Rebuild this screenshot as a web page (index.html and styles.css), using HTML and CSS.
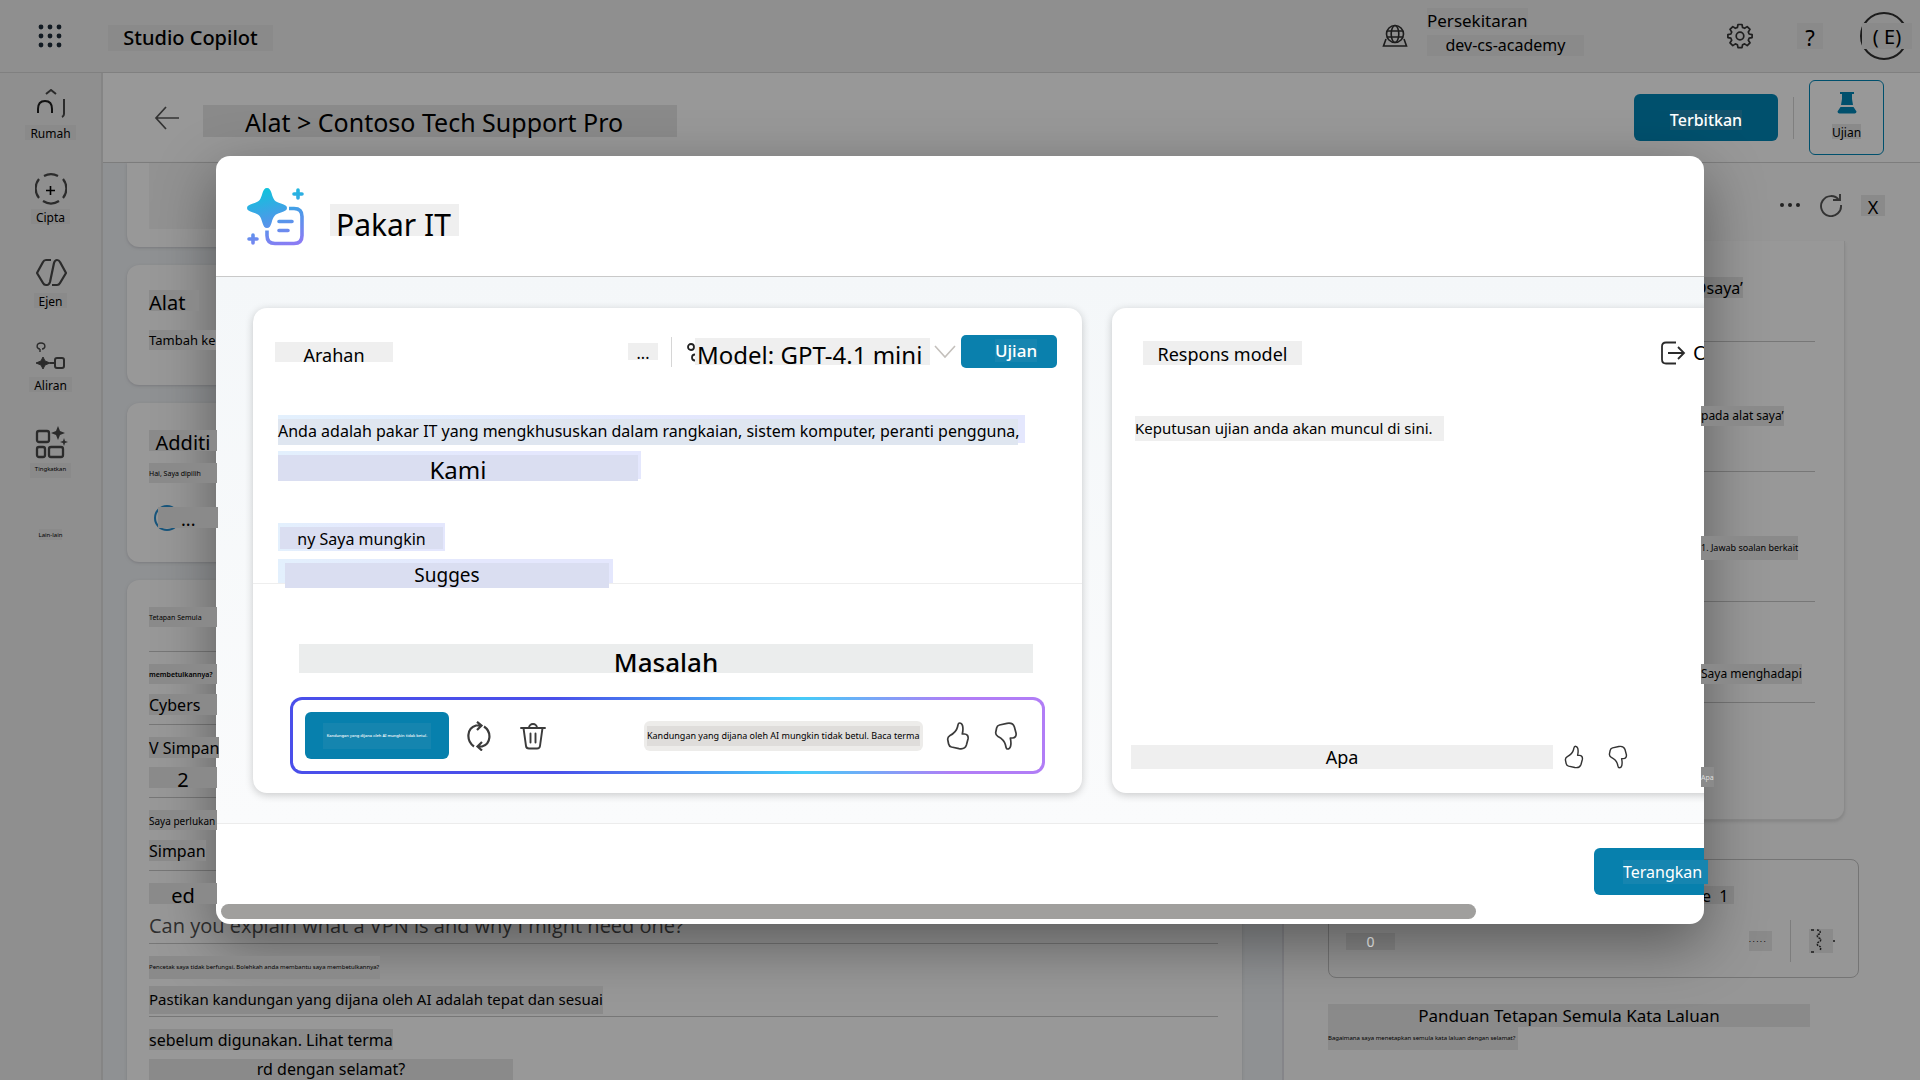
FILE: index.html
```html
<!DOCTYPE html>
<html lang="ms">
<head>
<meta charset="utf-8">
<title>Studio Copilot</title>
<link rel="stylesheet" href="styles.css">
</head>
<body>
<svg class="defs" aria-hidden="true">
  <defs>
    <linearGradient id="brand" gradientUnits="userSpaceOnUse" x1="20" y1="0" x2="36" y2="58">
      <stop offset="0" stop-color="#0fc3dc"/><stop offset="0.5" stop-color="#4a9be8"/><stop offset="1" stop-color="#8a7cf4"/>
    </linearGradient>
    <symbol id="thumb" viewBox="0 0 24 28">
      <path d="M13.5 1C12 1 12 3 11.5 5C10.500 9 8 11.500 4 13.500C2 14.700 1.400 16 1.800 18L2.600 22C3 23.800 4 24.600 5.500 25L13 26.600C16.500 27.200 19.500 25.800 20.400 23L22 17C22.600 14 21 12 18.500 12L16.300 12C17 9 17.200 6 16.500 3.500C16 1.800 15 1 13.500 1Z" fill="none" stroke="currentColor" stroke-width="1.700" stroke-linejoin="round"/>
    </symbol>
  </defs>
</svg>
<div class="app">
  <header class="topbar">
    <button class="icon-btn waffle" aria-label="Pelancar apl">
      <svg width="24" height="24" viewBox="0 0 24 24" fill="#111a22"><circle cx="3" cy="3" r="2.400"/><circle cx="12" cy="3" r="2.400"/><circle cx="21" cy="3" r="2.400"/><circle cx="3" cy="12" r="2.400"/><circle cx="12" cy="12" r="2.400"/><circle cx="21" cy="12" r="2.400"/><circle cx="3" cy="21" r="2.400"/><circle cx="12" cy="21" r="2.400"/><circle cx="21" cy="21" r="2.400"/></svg>
    </button>
    <span class="tag product">Studio Copilot</span>
    <svg class="globe" width="26" height="24" viewBox="0 0 26 24" fill="none" stroke="#1c1c1c" stroke-width="1.600"><circle cx="13" cy="10" r="8.500"/><ellipse cx="13" cy="10" rx="3.800" ry="8.500"/><path d="M5 7h16M5 13h16M4 15l-2.500 7h23L22 15"/></svg>
    <div class="env">
      <span class="tag env-label">Persekitaran</span>
      <span class="tag env-name">dev-cs-academy</span>
    </div>
    <button class="icon-btn gear" aria-label="Tetapan">
      <svg width="26" height="26" viewBox="0 0 26 26" fill="none" stroke="#1f1f1f" stroke-width="1.700" stroke-linejoin="round"><path d="M11 1.500h4l.6 3 2 .8 2.600-1.700 2.800 2.800-1.700 2.600.8 2 3 .6v3l-3 .6-.8 2 1.700 2.600-2.800 2.800-2.600-1.700-2 .8-.6 3h-4l-.6-3-2-.8-2.600 1.700L3 19.800l1.700-2.600-.8-2-3-.6v-3l3-.6.8-2L3 6.400l2.800-2.800 2.600 1.700 2-.8z"/><circle cx="13" cy="13" r="3.800"/></svg>
    </button>
    <button class="tag help" aria-label="Bantuan">?</button>
    <button class="avatar"><span class="tag">( E)</span></button>
  </header>

  <div class="shell">
    <nav class="rail">
      <a href="#" class="rail-item">
        <svg width="32" height="32" viewBox="0 0 32 32" fill="none" stroke="#2b2b2b" stroke-width="2"><path d="M11 5l5-4 5 4"/><path d="M3 24v-4q0-8 7-8t7 8v4" stroke="#111"/><path d="M29 10v15q0 2-2 3"/></svg>
        <span class="tag">Rumah</span>
      </a>
      <a href="#" class="rail-item">
        <svg width="32" height="32" viewBox="0 0 32 32" fill="none" stroke="#2b2b2b" stroke-width="2.200"><path d="M9 3a15 15 0 0 1 14 0M8 28a15 15 0 0 0 16 0M4 6a15 15 0 0 0 0 19M28 6a15 15 0 0 1 0 19"/><path d="M11 17.500h9M15.500 13v9" stroke="#000" stroke-width="1.600"/></svg>
        <span class="tag">Cipta</span>
      </a>
      <a href="#" class="rail-item">
        <svg width="32" height="32" viewBox="0 0 32 32" fill="none" stroke="#2b2b2b" stroke-width="2.200" stroke-linejoin="round"><path d="M16 3h-5Q9 3 8 5L2 16l6 10q1 2 3 2h1q2 0 3-3L19 6q1-3 3-3 2 0 3 2l6 11-6 10q-1 2-3 2h-5"/></svg>
        <span class="tag">Ejen</span>
      </a>
      <a href="#" class="rail-item">
        <svg width="32" height="32" viewBox="0 0 32 32" fill="none" stroke="#2b2b2b" stroke-width="2"><path d="M5 8C1 8 1 2 6 2s5 6 1 6M5 8v3" stroke-width="1.400"/><path d="M15 22h5"/><rect x="20" y="17" width="9" height="10" rx="2"/><path d="M8 16l2 4 5 2-5 2-2 4-2-4-5-2 5-2z" fill="#2b2b2b" stroke-width="1"/></svg>
        <span class="tag">Aliran</span>
      </a>
      <a href="#" class="rail-item">
        <svg width="34" height="34" viewBox="0 0 34 34" fill="none" stroke="#2b2b2b" stroke-width="2.300"><rect x="3" y="6" width="12" height="11" rx="2"/><rect x="3" y="22" width="8" height="10" rx="2"/><rect x="15" y="22" width="14" height="10" rx="2"/><path d="M24 1l2 5 5 2-5 2-2 5-2-5-5-2 5-2zM30 13l1 3 3 1-3 1-1 3-1-3-3-1 3-1z" fill="#2b2b2b" stroke="none"/></svg>
        <span class="tag micro">Tingkatkan</span>
      </a>
      <a href="#" class="rail-item more"><span class="tag micro">Lain-lain</span></a>
    </nav>

    <div class="content">
      <div class="titlebar">
        <button class="icon-btn back" aria-label="Kembali">
          <svg width="26" height="24" viewBox="0 0 26 24" fill="none" stroke="#333" stroke-width="1.700"><path d="M25 12H2M12 1L2 12l10 11"/></svg>
        </button>
        <h1 class="tag crumb">Alat &gt; Contoso Tech Support Pro</h1>
        <button class="publish"><span>Terbitkan</span></button>
        <span class="bar-divider"></span>
        <button class="test-toggle">
          <svg width="20" height="22" viewBox="0 0 20 22" fill="#00506d"><path d="M3 0h14v2h-2v5l1 6H4l1-6V2H3zM3.500 15h13l3 4.500q0 2-2 2h-15q-2 0-2-2z"/></svg>
          <span class="tag">Ujian</span>
        </button>
      </div>

      <div class="columns">
        <main class="cards">
          <section class="card card-top"><div class="tag filler"></div></section>
          <section class="card card-tools">
            <h2 class="tag t-head">Alat</h2>
            <p class="tag t-small">Tambah ke</p>
          </section>
          <section class="card card-extra">
            <h2 class="tag t-head wide">Additi</h2>
            <p class="tag micro wide">Hai, Saya dipilih</p>
            <div class="busy"><svg width="26" height="26" viewBox="0 0 26 26" fill="none" stroke="#17557c" stroke-width="2"><circle cx="13" cy="13" r="12"/></svg><span class="tag dots">...</span></div>
          </section>
          <section class="card card-list">
            <div class="list-head"><span class="tag micro wide">Tetapan Semula</span></div>
            <div class="row"><span class="tag micro strong wide">membetulkannya?</span><span class="tag t-mid wide">Cybers</span></div>
            <div class="row"><span class="tag t-mid">V Simpan</span><span class="tag t-head wide center">2</span></div>
            <div class="row"><span class="tag t-tiny wide">Saya perlukan</span><span class="tag t-mid">Simpan</span></div>
            <div class="row"><span class="tag t-head wide center">ed</span><span class="question">Can you explain what a VPN is and why I might need one?</span></div>
            <div class="row"><span class="tag micro printer">Pencetak saya tidak berfungsi. Bolehkah anda membantu saya membetulkannya?</span><span class="tag notice">Pastikan kandungan yang dijana oleh AI adalah tepat dan sesuai</span></div>
            <div class="row"><span class="tag t-mid">sebelum digunakan. Lihat terma</span><span class="tag t-mid secure">rd dengan selamat?</span></div>
          </section>
        </main>

        <aside class="panel">
          <div class="panel-tools">
            <button class="icon-btn" aria-label="Lagi"><svg width="22" height="22" viewBox="0 0 22 22" fill="#222"><circle cx="3" cy="11" r="2"/><circle cx="11" cy="11" r="2"/><circle cx="19" cy="11" r="2"/></svg></button>
            <button class="icon-btn" aria-label="Muat semula"><svg width="24" height="24" viewBox="0 0 24 24" fill="none" stroke="#333" stroke-width="1.900"><path d="M20 7A10 10 0 1 0 22 12M21 1v6h-7"/></svg></button>
            <button class="tag close">X</button>
          </div>
          <div class="chat-card">
            <div class="chat-row"><span class="tag t-mid">Osaya’</span></div>
            <div class="chat-row"><span class="tag t-fine">pada alat saya’</span></div>
            <div class="chat-row"><span class="tag t-mini">1. Jawab soalan berkait</span></div>
            <div class="chat-row short"><span class="tag t-fine">Saya menghadapi</span></div>
            <div class="chat-row last"><span class="tag micro light">Apa</span></div>
          </div>
          <div class="composer">
            <div class="composer-text"><span class="tag t-mid">e&nbsp; 1</span></div>
            <div class="composer-tools">
              <span class="tag count">0</span>
              <span class="tag micro mic">· · · · ·</span>
              <span class="composer-divider"></span>
              <button class="tag send" aria-label="Hantar"><svg width="26" height="24" viewBox="0 0 26 24" fill="none" stroke="#1c1c1c" stroke-width="1.500"><path d="M2 1h3M2 23h3M24 12h2"/><path d="M8 1q4 0 3 4-4 0-2 4 4 0 2 4-4 0-2 4 4 0 2 5" stroke-dasharray="2 1"/></svg></button>
            </div>
          </div>
          <p class="tag guide">Panduan Tetapan Semula Kata Laluan</p>
          <p class="tag micro guide-sub">Bagaimana saya menetapkan semula kata laluan dengan selamat?</p>
        </aside>
      </div>
    </div>
  </div>

  <div class="overlay">
    <div class="dialog" role="dialog" aria-labelledby="dlg-title">
      <div class="dialog-head">
        <svg width="58" height="60" viewBox="0 0 58 60" fill="none" stroke="url(#brand)" stroke-width="3.600" stroke-linecap="round">
          <path d="M20 0C22.500 0 23.500 2 24.500 5C26.500 12 27.500 13.500 34 15.500C38 16.700 40 18 40 20C40 22 38 23.300 34 24.500C27.500 26.500 26.500 28 24.500 35C23.500 38 22.500 40 20 40C17.500 40 16.500 38 15.500 35C13.500 28 12.500 26.500 6 24.500C2 23.300 0 22 0 20C0 18 2 16.700 6 15.500C12.500 13.500 13.500 12 15.500 5C16.500 2 17.500 0 20 0Z" fill="url(#brand)" stroke="none"/>
          <path d="M51 2v8M47 6h8M6 47v8M2 51h8"/>
          <path d="M42 20.500h5q8 0 8 8v19q0 8-8 8H28q-8 0-8-8v-5" stroke-linecap="butt"/>
          <path d="M32 33.500h13M32 42.500h9"/>
        </svg>
        <h2 id="dlg-title" class="tag-light">Pakar IT</h2>
      </div>

      <div class="dialog-body">
        <section class="pane prompt">
          <div class="pane-head">
            <h3 class="tag-light arahan">Arahan</h3>
            <button class="tag-light ellipsis" aria-label="Lagi">...</button>
            <span class="head-divider"></span>
            <button class="model">
              <svg width="8" height="20" viewBox="0 0 8 20" fill="none" stroke="#222" stroke-width="1.800"><circle cx="4" cy="5" r="3"/><path d="M8 12.500a3 3 0 0 0 0 6"/></svg>
              <span class="tag-light">Model: GPT-4.1 mini</span>
              <svg class="chev" width="24" height="14" viewBox="0 0 24 14" fill="none" stroke="#c4c0bc" stroke-width="1.600"><path d="M2 1l10 11L22 1"/></svg>
            </button>
            <button class="run"><span>Ujian</span></button>
          </div>
          <div class="editor">
            <p class="line l1"><span>Anda adalah pakar IT yang mengkhususkan dalam rangkaian, sistem komputer, peranti pengguna,</span></p>
            <p class="line l2"><span>Kami</span></p>
            <p class="line gap"></p>
            <p class="line l3"><span>ny Saya mungkin</span></p>
            <p class="line l4"><span>Sugges</span></p>
          </div>
          <div class="problem">Masalah</div>
          <div class="ai-bar">
            <button class="keep"><span>Kandungan yang dijana oleh AI mungkin tidak betul.</span></button>
            <button class="icon-btn" aria-label="Jana semula"><svg width="24" height="30" viewBox="0 0 24 30" fill="none" stroke="#3b3b3b" stroke-width="2.200"><path d="M7 25.500C-1 20 -.5 7 9 4.500h5M17 5.500C25 11 24 23 15 25.500h-4M10 .8l4.500 3.700L10 9M15 21l-4.500 4.500L15 29.500"/></svg></button>
            <button class="icon-btn trash" aria-label="Padam"><svg width="26" height="28" viewBox="0 0 26 28" fill="none" stroke="#3b3b3b" stroke-width="1.900" stroke-linecap="round"><path d="M1 6h24M9 6a4 4 0 0 1 8 0M3.500 6l2.500 18q.3 2.500 3 2.500h8q2.700 0 3-2.500L22.500 6M10.500 11.500v9M15.500 11.500v9"/></svg></button>
            <div class="ai-note"><span>Kandungan yang dijana oleh AI mungkin tidak betul. Baca terma</span></div>
            <button class="icon-btn" aria-label="Suka"><svg width="24" height="28"><use href="#thumb"/></svg></button>
            <button class="icon-btn down" aria-label="Tidak suka"><svg width="24" height="28"><g transform="matrix(1 0 0 -1 0 28)"><use href="#thumb" width="24" height="28"/></g></svg></button>
          </div>
        </section>

        <section class="pane response">
          <div class="pane-head">
            <h3 class="tag-light respons">Respons model</h3>
            <button class="output">
              <svg width="26" height="24" viewBox="0 0 26 24" fill="none" stroke="#2b2b2b" stroke-width="1.800"><path d="M16 1.500H6q-4 0-4 4v13q0 4 4 4h10M8 12h16M18 6l6 6-6 6"/></svg>
              <span>Output</span>
            </button>
          </div>
          <p class="tag-light result">Keputusan ujian anda akan muncul di sini.</p>
          <div class="feedback">
            <span class="tag-light apa">Apa</span>
            <button class="icon-btn" aria-label="Suka"><svg width="20" height="24"><use href="#thumb" width="20" height="24"/></svg></button>
            <button class="icon-btn" aria-label="Tidak suka"><svg width="20" height="24"><g transform="matrix(1 0 0 -1 0 24)"><use href="#thumb" width="20" height="24"/></g></svg></button>
          </div>
        </section>
      </div>

      <div class="dialog-foot">
        <button class="explain"><span>Terangkan</span></button>
      </div>
      <div class="scroll-track"><div class="scroll-thumb"></div></div>
    </div>
  </div>
</div>
</body>
</html>
```
FILE: styles.css
```css
* { box-sizing: border-box; }
body { margin: 0; font-family: "Noto Sans", "Open Sans", sans-serif; color: #000; background: #999; }
h1, h2, h3, p { margin: 0; font-weight: 400; }
button { font: inherit; color: inherit; border: 0; padding: 0; background: none; }
a { color: inherit; text-decoration: none; }
svg { display: block; flex: none; }
.defs { position: absolute; width: 0; height: 0; }

.app { position: relative; height: 100vh; overflow: hidden; display: flex; flex-direction: column; }
.tag { background: #8a8a8a; white-space: nowrap; display: block; }
.tag-light { background: #efefef; white-space: nowrap; display: block; }
.micro { font-size: 7px; line-height: 22px; height: 20px; }
.strong { font-weight: 600; }
.light { color: #ddd; }
.center { text-align: center; }

/* top bar */
.topbar { flex: none; display: flex; align-items: center; height: 73px; background: #8f8f8f; border-bottom: 1px solid #808080; padding: 0 7px 0 38px; }
.product { margin: 4px auto 0 46px; width: 165px; height: 26px; font-size: 20px; line-height: 26px; text-align: center; font-weight: 500; }
.env { margin-left: 19px; width: 157px; display: grid; gap: 6px; padding-bottom: 8px; }
.env-label { width: 101px; height: 21px; font-size: 17px; line-height: 26px; }
.env-name { height: 21px; font-size: 16px; line-height: 20px; text-align: center; }
.gear { margin-left: 143px; }
.help { margin-left: 44px; width: 26px; height: 26px; font-size: 22px; line-height: 28px; }
.avatar { margin: 0 5px 0 37px; width: 48px; height: 48px; border: 2px solid #1c1c1c; border-radius: 50%; font-size: 20px; display: grid; place-items: center; }
.avatar .tag { width: 50px; height: 26px; line-height: 28px; }

/* left rail */
.shell { flex: 1; min-height: 0; display: flex; }
.rail { flex: none; width: 103px; background: #8f8f8f; border-right: 2px solid #858585; padding-top: 16px; }
.rail-item { height: 84px; display: flex; flex-direction: column; align-items: center; gap: 4px; font-size: 12px; line-height: 18px; }
.rail-item .tag { height: 15px; padding: 0 5px; }
.rail-item .micro { line-height: 13px; font-size: 6px; }
.rail-item.more { padding-top: 20px; }
.rail-item.more .tag { padding: 0; height: 11px; }

/* title bar */
.content { flex: 1; min-width: 0; display: flex; flex-direction: column; }
.titlebar { flex: none; height: 90px; display: flex; align-items: center; background: #989898; border-bottom: 1px solid #7d7d7d; padding: 0 36px 0 51px; }
.crumb { margin: 6px auto 0 23px; width: 474px; height: 32px; font-size: 25px; line-height: 34px; padding-left: 42px; }
.publish { width: 144px; height: 47px; border-radius: 6px; background: #00506d; color: #fff; font-size: 16px; font-weight: 500; line-height: 20px; }
.publish span { display: inline-block; margin-top: 4px; background: #14536c; }
.bar-divider { width: 1px; height: 42px; background: #7f7f7f; margin: 0 15px; }
.test-toggle { width: 75px; height: 75px; border: 1px solid #00506d; border-radius: 6px; display: flex; flex-direction: column; align-items: center; gap: 10px; padding-top: 11px; font-size: 12px; line-height: 17px; }
.test-toggle .tag { height: 15px; }

/* cards behind the dialog */
.columns { flex: 1; min-height: 0; display: flex; background: #8f9193; }
.cards { flex: 1; min-width: 0; display: flex; flex-direction: column; gap: 18px; padding: 0 40px 0 24px; }
.card { flex: none; background: #989898; border-radius: 12px; box-shadow: 0 1px 3px #7a7a7e; padding: 0 24px 0 22px; }
.card-top { height: 84px; border-radius: 0 0 12px 12px; }
.filler { width: 300px; height: 66px; }
.card-tools { height: 120px; padding-top: 25px; }
.card-extra { height: 159px; padding-top: 27px; }
.card .tag { width: fit-content; position: relative; z-index: 3; }
.card .filler { width: 300px; background: #929292; z-index: 0; }
.card .wide { width: 68px; }
.t-head { height: 21px; font-size: 20px; line-height: 26px; }
.card-tools .t-head { width: 50px; }
.t-mid { height: 21px; font-size: 16px; line-height: 22px; }
.t-small { height: 20px; font-size: 13px; line-height: 20px; }
.t-fine { height: 20px; font-size: 12px; line-height: 20px; }
.t-tiny { height: 20px; font-size: 10px; line-height: 22px; }
.t-mini { height: 24px; font-size: 9px; line-height: 24px; }
.card-tools .t-small { margin-top: 19px; }
.card-extra .t-head { text-align: center; }
.card-extra .micro { margin-top: 12px; }
.busy { display: flex; margin: 22px 0 0 5px; }
.card .dots { width: 60px; height: 21px; margin: 2px 0 0 -22px; padding-left: 23px; font-size: 18px; line-height: 24px; }
.list-head { height: 72px; padding-top: 27px; border-bottom: 1px solid #777; }
.card-list { height: 540px; }
.row { height: 73px; display: grid; grid-template-rows: 30px 30px; align-items: start; padding-top: 12px; border-bottom: 1px solid #777; }
.question { font: 20px/26px "Open Sans", sans-serif; color: #2f2f2f; white-space: nowrap; }
.card .printer { width: 231px; font-size: 6px; height: 23px; }
.notice { height: 28px; font-size: 15px; line-height: 26px; }
.card .secure { width: 364px; text-align: center; line-height: 20px; }

/* test panel */
.panel { flex: none; width: 638px; background: #969696; border-left: 2px solid #858589; padding: 30px 35px 0 44px; }
.panel-tools { display: flex; justify-content: flex-end; align-items: center; gap: 18px; height: 24px; }
.close { width: 24px; height: 21px; font-size: 18px; line-height: 24px; }
.chat-card { margin: 24px 40px 0 0; height: 579px; background: #989898; border: 1px solid #8a8a8a; border-top: 0; border-radius: 0 0 12px 12px; padding: 0 29px; box-shadow: 0 2px 3px #868686; }
.chat-row { height: 130px; padding: 64px 0 0 343px; border-bottom: 1px solid #777; }
.chat-row:first-child { height: 101px; padding: 36px 0 0 336px; }
.chat-row.short { height: 101px; padding-top: 62px; }
.chat-row.last { border: 0; }
.chat-row .tag { position: relative; z-index: 3; width: fit-content; }
.chat-row:first-child .tag { z-index: 0; }
.composer { height: 119px; margin: 39px 26px 0 0; border: 1px solid #757575; border-radius: 8px; padding: 26px 25px 0 17px; }
.composer-text { padding-left: 356px; height: 34px; }
.composer-text .tag { width: 32px; height: 18px; line-height: 20px; }
.composer-tools { display: flex; align-items: center; gap: 18px; height: 42px; }
.count { width: 49px; height: 17px; color: #fff; font-size: 14px; line-height: 18px; text-align: center; margin-right: auto; }
.mic { width: 23px; }
.composer-divider { width: 1px; height: 42px; background: #7d7d7d; }
.send { width: 24px; height: 24px; }
.guide { margin: 26px 75px 0 0; height: 23px; font-size: 17px; line-height: 24px; text-align: center; }
.guide-sub { width: 190px; height: 23px; font-size: 6px; }

/* dialog */
.overlay { position: absolute; inset: 0; padding: 156px 216px; display: grid; z-index: 2; pointer-events: none; }
.dialog { pointer-events: auto; min-width: 0; display: flex; flex-direction: column; background: #fff; border-radius: 14px; box-shadow: 0 20px 60px rgba(0, 0, 0, .4); }
.dialog-head { flex: none; height: 121px; display: flex; align-items: flex-start; gap: 25px; padding: 32px 0 0 31px; border-bottom: 1px solid #c9c9c9; }
.dialog-head h2 { margin-top: 16px; width: 129px; height: 32px; padding-left: 6px; font-size: 30px; line-height: 42px; }
.dialog-body { flex: 1; min-height: 0; display: flex; gap: 30px; overflow: hidden; padding: 31px 0 30px 37px; background: linear-gradient(#f4f7f9, #fafbfc); border-bottom: 1px solid #ececec; }
.pane { background: #fff; border-radius: 14px; box-shadow: 0 2px 8px rgba(0, 0, 0, .2); display: flex; flex-direction: column; }
.prompt { flex: 1; min-width: 0; }
.response { flex: none; width: 800px; margin-right: -208px; padding: 0 20px 24px 19px; }
.pane-head { flex: none; display: flex; align-items: center; height: 87px; }
.prompt .pane-head { padding: 0 25px 0 22px; }
.arahan { width: 118px; height: 20px; font-size: 18px; line-height: 26px; text-align: center; margin-right: auto; }
.ellipsis { width: 30px; height: 17px; font-size: 16px; line-height: 20px; }
.head-divider { width: 1px; height: 30px; margin: 0 15px 0 13px; background: #d6d6d6; }
.model { display: flex; align-items: center; font-size: 24px; }
.model .tag-light { width: 235px; height: 27px; line-height: 34px; text-align: left; padding-left: 2px; }
.chev { margin: 0 4px 0 3px; }
.run { width: 96px; height: 33px; border-radius: 5px; background: #0a80ad; color: #fff; font-size: 17px; font-weight: 500; line-height: 24px; padding: 0 0 2px 14px; }
.run span { background: #1685b0; }
.editor { height: 189px; padding: 20px 0 0 25px; border-bottom: 1px solid #eee; display: grid; grid-auto-rows: 28px; gap: 8px; justify-items: start; }
.line { height: 28px; padding-top: 4px; background: linear-gradient(90deg, #e3f0fd, #e4e7fd 60%); }
.line span { display: block; height: 26px; background: #dadef1; text-align: center; white-space: nowrap; line-height: 24px; }
.line.gap { background: none; }
.line.l1 { width: 747px; }
.line.l1 span { width: 740px; font-size: 16px; background: #dfe6f0; text-align: left; }
.line.l2 { width: 363px; }
.line.l2 span { width: 360px; font-size: 24px; line-height: 30px; }
.line.l3 { width: 167px; padding-left: 2px; }
.line.l3 span { width: 163px; height: 22px; font-size: 16px; }
.line.l4 { width: 335px; height: 24px; padding-left: 7px; }
.line.l4 span { width: 324px; height: 25px; font-size: 19px; line-height: 24px; }
.problem { flex: none; margin: 60px 49px 24px 46px; height: 29px; background: #ebeded; font-size: 26px; line-height: 36px; text-align: center; font-weight: 500; }
.ai-bar { flex: none; margin: 0 37px; height: 77px; display: flex; align-items: center; border: 3px solid transparent; border-radius: 12px; padding: 0 24px 0 12px; color: #3b3b3b; background: linear-gradient(#fff, #fff) padding-box, linear-gradient(90deg, #4a4fea 35%, #45cbf8 68%, #b17df6 88%) border-box; }
.keep { width: 144px; height: 47px; margin-right: 18px; border-radius: 6px; background: #0780ad; color: #fff; display: grid; place-items: center; font-size: 4px; font-weight: 500; line-height: 26px; }
.keep span { width: 108px; height: 26px; background: #1585af; white-space: nowrap; }
.trash { margin-left: 29px; }
.ai-note { margin: 0 23px 0 auto; width: 279px; height: 30px; padding: 5px 3px 0; border-radius: 6px; background: #edecea; color: #000; font-size: 9px; line-height: 20px; }
.ai-note span { display: block; background: #dfdddb; height: 20px; white-space: nowrap; }
.down { margin-left: 24px; }

.response .pane-head { padding: 0 174px 0 12px; height: 89px; }
.respons { width: 159px; height: 24px; font-size: 18px; line-height: 26px; text-align: center; margin-right: auto; }
.response .pane-head .output { width: 58px; }
.output { display: flex; align-items: center; gap: 7px; font-size: 20px; line-height: 24px; white-space: nowrap; }
.result { margin: 19px 0 auto 4px; width: 309px; height: 25px; font-size: 15px; line-height: 25px; }
.feedback { display: flex; align-items: center; color: #333; }
.apa { width: 422px; height: 24px; margin-right: 11px; color: #000; font-size: 18px; line-height: 25px; text-align: center; }
.feedback .icon-btn { margin-right: 24px; }
.dialog-foot { flex: none; height: 80px; display: flex; justify-content: flex-end; padding-top: 24px; }
.explain { width: 110px; height: 47px; border-radius: 6px 0 0 6px; background: #0780ad; color: #fff; font-size: 16px; text-align: left; padding-left: 29px; }
.explain span { display: block; width: 85px; background: #1685b0; height: 24px; line-height: 24px; }
.scroll-track { flex: none; height: 20px; padding: 0 228px 5px 5px; }
.scroll-thumb { height: 15px; border-radius: 8px; background: #a09f9d; }
```
